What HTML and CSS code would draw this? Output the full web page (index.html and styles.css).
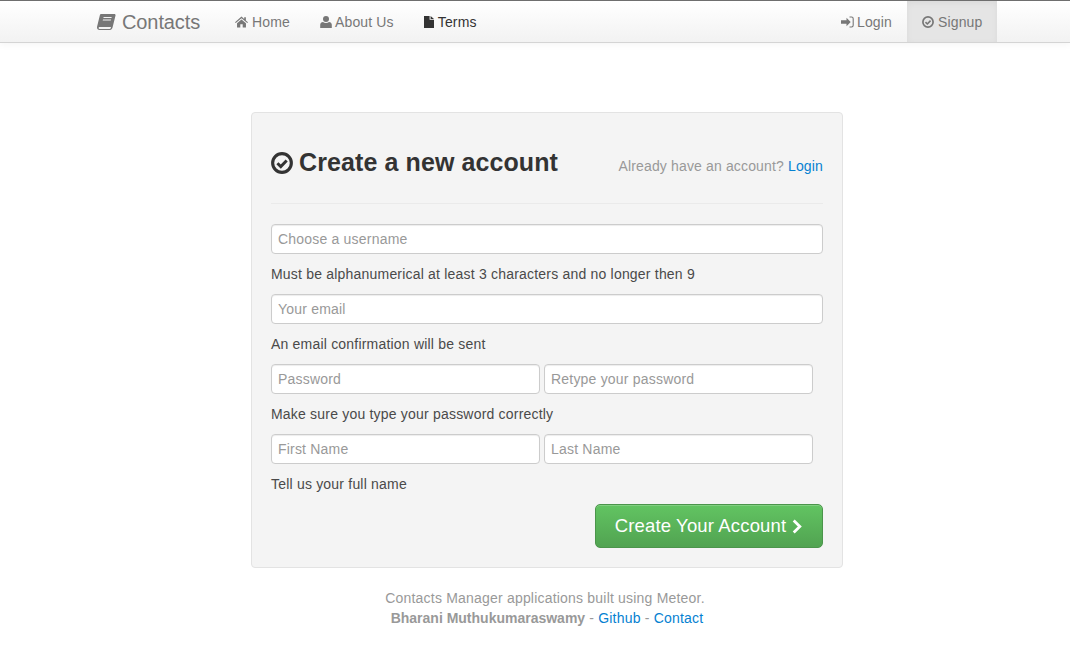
FILE: index.html
```html
<!DOCTYPE html>
<html lang="en">
<head>
<meta charset="utf-8">
<title>Contacts</title>
<link rel="stylesheet" href="styles.css">
</head>
<body>
<svg class="defs" width="0" height="0" aria-hidden="true">
  <symbol id="i-check" viewBox="0 0 24 24">
    <circle cx="12" cy="12" r="10.200" fill="none" stroke="currentColor" stroke-width="3.400"/>
    <path d="M7 12.200l3.700 3.700 6.400-6.600" fill="none" stroke="currentColor" stroke-width="3.200"/>
  </symbol>
</svg>
<header class="navbar">
  <a class="brand" href="#">
    <svg class="ico-book" viewBox="0 0 20 18"><path fill="currentColor" d="M4.600 .5h13.600c1 0 1.500.7 1.300 1.600l-3 12.200c-.3 1.500-1.300 3.200-3 3.200H2.800C1 17.500 0 16.300 0 14.800c0-.4.100-.9.200-1.300L3 2c.2-1 .7-1.500 1.600-1.500z"/><path fill="#f3f3f3" d="M2.600 14.300h12.200l-.4 1.200c-.2.5-.6.8-1.100.8H2.800c-.7 0-1.100-.4-1.100-1s.3-1 .9-1z"/><path fill="#f3f3f3" d="M7 3.800h8.500l-.3 1.100H6.700zM6.300 6.300h8.500l-.3 1.100H6z"/></svg>
    <span>Contacts</span>
  </a>
  <nav class="nav-left">
    <a class="nav-item" href="#"><svg class="ico ico-home" viewBox="0 0 14 12"><path fill="currentColor" d="M7 0.200L0 6.300l.8.900L7 1.900l6.200 5.300.8-.9-2.300-2V1h-1.800v1.700zM2.200 7.300V12h3.500V8.500h2.600V12h3.500V7.300L7 3.200z"/></svg>Home</a>
    <a class="nav-item" href="#"><svg class="ico" viewBox="0 0 12 12"><circle fill="currentColor" cx="6" cy="3.100" r="3"/><path fill="currentColor" d="M0.200 12V8.800C.2 7.200 1.500 6.300 3 6.100c.8.700 1.800 1 3 1s2.200-.3 3-1c1.500.2 2.800 1.100 2.800 2.700V12z"/></svg>About Us</a>
    <a class="nav-item nav-dark" href="#"><svg class="ico ico-file" viewBox="0 0 10 12"><path fill="currentColor" d="M0 0h5.600v3.800H10V12H0zM6.600 0L10 2.900H6.600z"/></svg>Terms</a>
  </nav>
  <nav class="nav-right">
    <a class="nav-item" href="#"><svg class="ico ico-login" viewBox="0 0 13 12"><path fill="currentColor" d="M5.500 1.800l4.200 4.200-4.200 4.200V7.700H0V4.300h5.500z"/><path fill="none" stroke="currentColor" stroke-width="1.100" d="M8.500 1h2c1 0 1.700.7 1.700 1.700v6.600c0 1-.7 1.700-1.700 1.700h-2"/></svg>Login</a>
    <a class="nav-item nav-active" href="#"><svg class="ico ico-signup"><use href="#i-check"/></svg>Signup</a>
  </nav>
</header>

<main class="page">
  <form class="card">
    <div class="card-head">
      <h1 class="title"><svg class="ico-title"><use href="#i-check"/></svg>Create a new account</h1>
      <p class="already">Already have an account? <a href="#">Login</a></p>
    </div>
    <div class="group">
      <input class="field field-full" type="text" placeholder="Choose a username">
      <p class="help">Must be alphanumerical at least 3 characters and no longer then 9</p>
    </div>
    <div class="group">
      <input class="field field-full" type="text" placeholder="Your email">
      <p class="help">An email confirmation will be sent</p>
    </div>
    <div class="group">
      <div class="pair">
        <input class="field" type="password" placeholder="Password">
        <input class="field" type="password" placeholder="Retype your password">
      </div>
      <p class="help">Make sure you type your password correctly</p>
    </div>
    <div class="group">
      <div class="pair">
        <input class="field" type="text" placeholder="First Name">
        <input class="field" type="text" placeholder="Last Name">
      </div>
      <p class="help">Tell us your full name</p>
    </div>
    <div class="actions">
      <button class="submit" type="button">Create Your Account<svg class="ico-chevron" viewBox="0 0 10 16"><path fill="none" stroke="currentColor" stroke-width="3" d="M1.500 1.500L8 8l-6.500 6.500"/></svg></button>
    </div>
  </form>
  <footer class="foot">
    <p class="foot-note">Contacts Manager applications built using Meteor.</p>
    <p><strong>Bharani Muthukumaraswamy</strong> - <a href="#">Github</a> - <a href="#">Contact</a></p>
  </footer>
</main>
</body>
</html>
```
FILE: styles.css
```css
* { box-sizing: border-box; }
html, body { margin: 0; padding: 0; }
body {
  font-family: "Liberation Sans", Arial, sans-serif;
  font-size: 14px;
  line-height: 20px;
  letter-spacing: 0.2px;
  color: #333;
  background: #fff;
}
p { margin: 0; }
a { color: #0581d1; text-decoration: none; }
.defs { position: absolute; }

.navbar {
  display: flex;
  align-items: stretch;
  height: 43px;
  padding-left: 97px;
  padding-right: 73px;
  background: linear-gradient(#ffffff, #f2f2f2);
  border-top: 1px solid #6e6e6e;
  border-bottom: 1px solid #d4d4d4;
  box-shadow: 0 1px 8px rgba(0, 0, 0, 0.05);
}
.brand {
  display: flex;
  align-items: center;
  width: 123px;
  color: #777;
  font-size: 20px;
  letter-spacing: -0.1px;
}
.ico-book { width: 19px; height: 18px; margin-right: 6px; }
.nav-left { display: flex; }
.nav-right { display: flex; margin-left: auto; }
.nav-item {
  display: flex;
  align-items: center;
  padding: 0 15px;
  color: #777;
  letter-spacing: 0.15px;
}
.nav-dark { color: #333; }
.nav-active { background: #e5e5e5; box-shadow: inset 0 2px 6px rgba(0, 0, 0, 0.05); width: 90px; }
.ico { width: 12px; height: 12px; margin-right: 3px; flex: none; }
.ico-home { width: 13px; margin-right: 4px; }
.ico-file { width: 10px; margin-right: 4px; }
.ico-login { width: 13px; }
.ico-signup { margin-right: 4px; }

.page { width: 592px; margin: 69px 0 0 251px; }
.card {
  padding: 19px;
  background: #f4f4f4;
  border: 1px solid #e3e3e3;
  border-radius: 4px;
}
.card-head {
  display: flex;
  justify-content: space-between;
  align-items: baseline;
  height: 62px;
  margin-top: 10px;
  margin-bottom: 20px;
  border-bottom: 1px solid #eaeaea;
}
.title {
  margin: 0;
  font-size: 25px;
  line-height: 40px;
  font-weight: 700;
  letter-spacing: 0.1px;
  color: #333;
}
.ico-title { width: 22px; height: 22px; margin-right: 6px; vertical-align: -3px; }
.already { color: #999; letter-spacing: 0.15px; }

.group { margin-bottom: 10px; }
.pair { display: flex; gap: 4px; }
.field {
  display: block;
  width: 269px;
  height: 30px;
  padding: 4px 6px;
  font: 14px/20px "Liberation Sans", Arial, sans-serif;
  letter-spacing: 0.2px;
  color: #555;
  background: #fff;
  border: 1px solid #ccc;
  border-radius: 4px;
  box-shadow: inset 0 1px 1px rgba(0, 0, 0, 0.075);
}
.field-full { width: 100%; }
.field::placeholder { color: #999; opacity: 1; }
.help { margin-top: 10px; color: #4a4a4a; }

.actions { display: flex; justify-content: flex-end; }
.submit {
  display: flex;
  align-items: center;
  justify-content: center;
  width: 228px;
  height: 44px;
  padding: 0;
  font: 18.5px/24px "Liberation Sans", Arial, sans-serif;
  letter-spacing: 0.15px;
  color: #fff;
  background: linear-gradient(#62c462, #51a351);
  border: 1px solid #4b954b;
  border-radius: 5px;
  box-shadow: inset 0 1px 0 rgba(255, 255, 255, 0.2);
}
.ico-chevron { width: 12px; height: 15px; margin-left: 5px; }

.foot { margin-top: 20px; text-align: center; color: #999; }
.foot strong { letter-spacing: 0; }
.foot-note { padding-right: 4px; }
```
